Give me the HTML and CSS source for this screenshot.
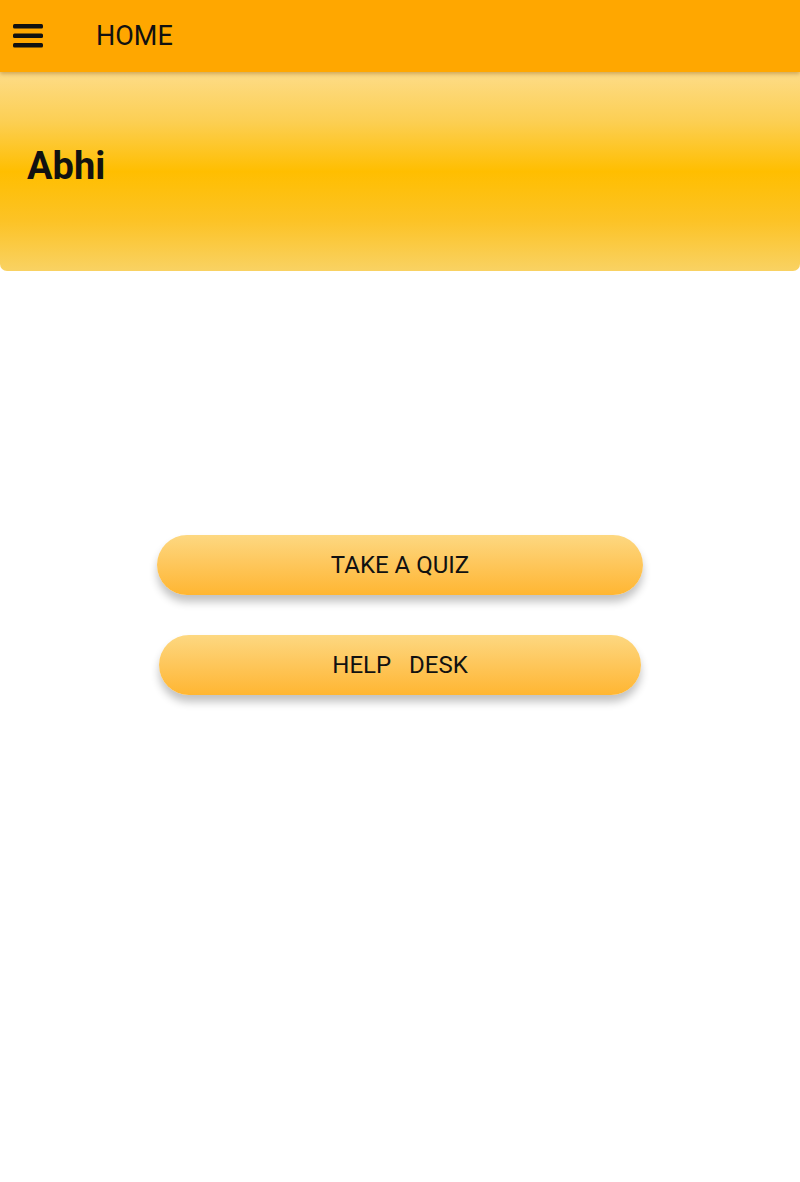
FILE: index.html
```html
<!DOCTYPE html>
<html>
<head>
<meta charset="utf-8">
<link rel="stylesheet" href="styles.css">
</head>
<body>
<header class="topbar">
  <svg class="menu-icon" width="30" height="24" viewBox="0 0 30 24">
    <rect x="0" y="0" width="30" height="4.5" rx="1.5" fill="#111"/>
    <rect x="0" y="9.5" width="30" height="4.5" rx="1.5" fill="#111"/>
    <rect x="0" y="19" width="30" height="4.5" rx="1.5" fill="#111"/>
  </svg>
  <span class="title">HOME</span>
</header>
<section class="banner">
  <h1 class="name">Abhi</h1>
</section>
<main class="actions">
  <button class="pill pill-wide">TAKE A QUIZ</button>
  <button class="pill pill-narrow">HELP   DESK</button>
</main>
</body>
</html>
```

FILE: styles.css
```css
html, body {
  margin: 0;
  padding: 0;
  background: #ffffff;
  font-family: Roboto, "Liberation Sans", sans-serif;
  color: #111;
}

.topbar {
  position: relative;
  z-index: 2;
  height: 72px;
  background: #ffa700;
  display: flex;
  align-items: center;
  padding-left: 13px;
  box-shadow: 0 2px 4px rgba(120, 70, 0, 0.35);
}

.menu-icon {
  display: block;
}

.title {
  margin-left: 53px;
  font-size: 27px;
  font-weight: 400;
  color: #111;
}

.banner {
  height: 199px;
  border-radius: 0 0 7px 7px;
  background: linear-gradient(to bottom, #fddc88 0%, #fccf53 25%, #ffbe00 50%, #fcc326 75%, #f9d263 100%);
  display: flex;
  align-items: center;
  padding-left: 27px;
  box-sizing: border-box;
  padding-bottom: 12px;
}

.name {
  margin: 0;
  font-size: 38px;
  font-weight: 700;
  color: #111;
}

.actions {
  display: flex;
  flex-direction: column;
  align-items: center;
  padding-top: 264px;
  padding-bottom: 40px;
  gap: 40px;
}

.pill {
  height: 60px;
  border: none;
  border-radius: 30px;
  background: linear-gradient(to bottom, #fdd881 0%, #fec65a 50%, #ffb632 100%);
  box-shadow: 0 7px 9px rgba(0, 0, 0, 0.24);
  font-family: Roboto, "Liberation Sans", sans-serif;
  font-size: 24px;
  color: #111;
  white-space: pre;
  padding: 0;
}

.pill-wide {
  width: 486px;
}

.pill-narrow {
  width: 482px;
}
```
